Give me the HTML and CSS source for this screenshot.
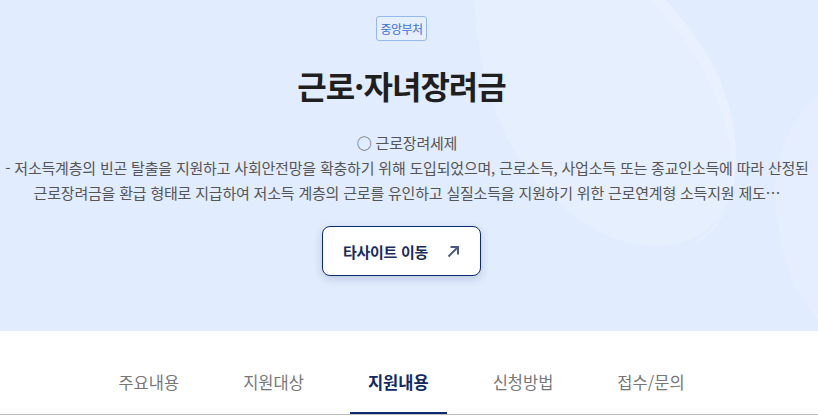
FILE: index.html
```html
<!DOCTYPE html>
<html lang="ko">
<head>
  <meta charset="UTF-8">
  <meta name="viewport" content="width=device-width, initial-scale=1.0">
  <link rel="stylesheet" href="styles.css">
</head>
<body>
  <section class="hero">
    <svg class="hero-deco" width="818" height="331" viewBox="0 0 818 331" aria-hidden="true">
      <path d="M474 0 C480 110 520 190 600 232 C660 262 715 240 728 200 C745 130 700 50 650 0 Z" fill="#e6effe"/>
      <path d="M650 0 C700 50 745 130 728 200 C722 225 705 240 690 245 C740 220 748 150 720 80 C705 45 680 15 665 0 Z" fill="#e9f1ff"/>
      <path d="M818 95 C790 120 770 160 776 210 C780 250 790 290 818 320 Z" fill="#e5eefe"/>
    </svg>

    <div class="hero-inner">
      <span class="badge">중앙부처</span>
      <h1 class="title">근로·자녀장려금</h1>
      <p class="summary">
        ○ 근로장려세제<br>
        - 저소득계층의 빈곤 탈출을 지원하고 사회안전망을 확충하기 위해 도입되었으며, 근로소득, 사업소득 또는 종교인소득에 따라 산정된<br>
        근로장려금을 환급 형태로 지급하여 저소득 계층의 근로를 유인하고 실질소득을 지원하기 위한 근로연계형 소득지원 제도…
      </p>
      <a class="site-link" href="#">
        타사이트 이동
        <svg width="13" height="13" viewBox="0 0 13 13" aria-hidden="true">
          <path d="M1.5 11.5 L11 2 M3.5 2 H11 V9.5" fill="none" stroke="#4a5a82" stroke-width="2"/>
        </svg>
      </a>
    </div>
  </section>

  <nav class="tabs">
    <a class="tab" href="#">주요내용</a>
    <a class="tab" href="#">지원대상</a>
    <a class="tab active" href="#">지원내용</a>
    <a class="tab" href="#">신청방법</a>
    <a class="tab" href="#">접수/문의</a>
  </nav>
</body>
</html>
```

FILE: styles.css
```css
body {
  margin: 0;
  padding: 0;
  font-family: "Noto Sans CJK KR", "Noto Sans", sans-serif;
  background: #fff;
  overflow: hidden;
}

.hero {
  position: relative;
  height: 331px;
  background: #e1ecfe;
  overflow: hidden;
}

.hero-deco {
  position: absolute;
  top: 0;
  left: 0;
}

.hero-inner {
  position: relative;
  width: 803px;
  display: flex;
  flex-direction: column;
  align-items: center;
  padding-top: 16px;
}

.badge {
  display: inline-block;
  height: 23px;
  line-height: 23px;
  padding: 0 3px;
  border: 1px solid #94b8f2;
  border-radius: 3px;
  font-size: 12px;
  letter-spacing: -0.5px;
  color: #3b6fd6;
  background: #e6effe;
}

.title {
  margin: 22px 0 0;
  font-size: 32px;
  line-height: 44px;
  letter-spacing: -1px;
  font-weight: 700;
  color: #1f1f1f;
}

.summary {
  margin: 23px 0 0;
  padding-left: 11px;
  font-size: 15px;
  line-height: 25px;
  letter-spacing: -0.2px;
  color: #555;
  text-align: center;
  white-space: nowrap;
}

.site-link {
  display: flex;
  align-items: center;
  gap: 19px;
  margin-top: 21px;
  width: 159px;
  height: 50px;
  box-sizing: border-box;
  padding-left: 20px;
  border: 1.5px solid #0d2b70;
  border-radius: 8px;
  background: #fff;
  box-shadow: 0 3px 8px rgba(40, 60, 110, 0.2);
  font-size: 15px;
  letter-spacing: -0.3px;
  font-weight: 700;
  color: #1b2c5c;
  text-decoration: none;
}

.tabs {
  display: flex;
  justify-content: center;
  gap: 28px;
  padding: 27px 15px 0 0;
  border-bottom: 1px solid #bdbdbd;
}

.tab {
  padding: 12px 18px 18px;
  font-size: 16.5px;
  line-height: 24px;
  color: #777;
  text-decoration: none;
  border-bottom: 2px solid transparent;
}

.tab.active {
  color: #102a66;
  font-weight: 700;
  border-bottom-color: #0d2b70;
}
```
